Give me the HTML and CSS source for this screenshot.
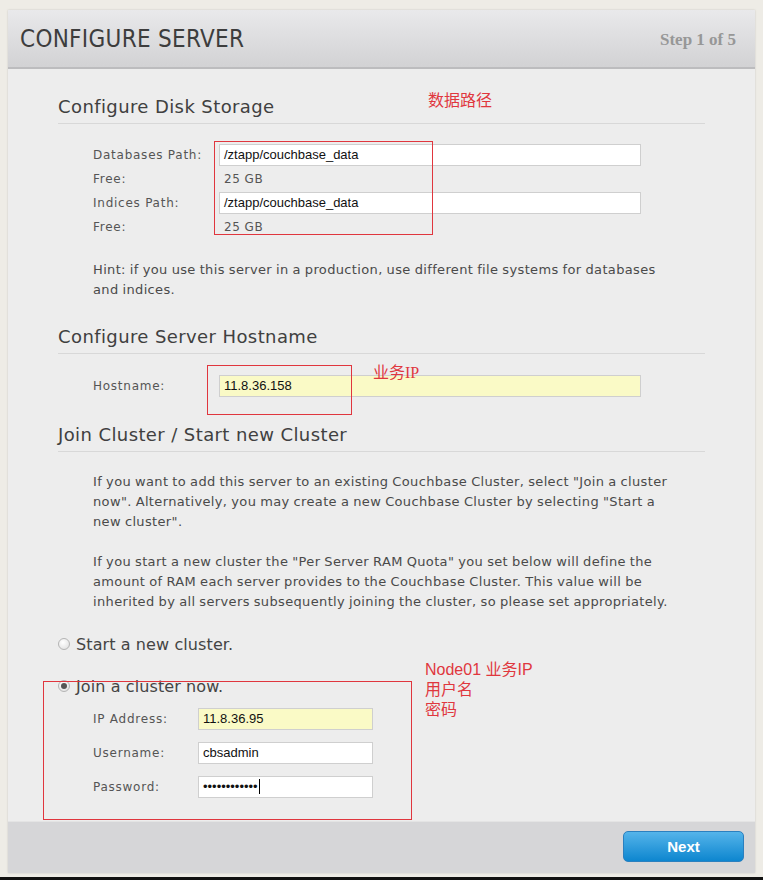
FILE: index.html
```html
<!DOCTYPE html>
<html>
<head>
<meta charset="utf-8">
<link rel="stylesheet" href="styles.css">
</head>
<body>
<div class="panel">
  <div class="header">
    <h1 class="title">CONFIGURE SERVER</h1>
    <span class="step">Step 1 of 5</span>
  </div>
  <div class="main">
    <h2 class="sec sec-first">Configure Disk Storage</h2>
    <div class="block disk">
      <div class="row"><span class="lbl">Databases Path:</span><span class="inp">/ztapp/couchbase_data</span></div>
      <div class="row"><span class="lbl">Free:</span><span class="val">25 GB</span></div>
      <div class="row"><span class="lbl">Indices Path:</span><span class="inp">/ztapp/couchbase_data</span></div>
      <div class="row"><span class="lbl">Free:</span><span class="val">25 GB</span></div>
    </div>
    <p class="txt hint">Hint: if you use this server in a production, use different file systems for databases and indices.</p>

    <h2 class="sec">Configure Server Hostname</h2>
    <div class="block host">
      <div class="row"><span class="lbl">Hostname:</span><span class="inp yellow">11.8.36.158</span></div>
    </div>

    <h2 class="sec">Join Cluster / Start new Cluster</h2>
    <p class="txt p1">If you want to add this server to an existing Couchbase Cluster, select "Join a cluster now". Alternatively, you may create a new Couchbase Cluster by selecting "Start a new cluster".</p>
    <p class="txt p2">If you start a new cluster the "Per Server RAM Quota" you set below will define the amount of RAM each server provides to the Couchbase Cluster. This value will be inherited by all servers subsequently joining the cluster, so please set appropriately.</p>

    <label class="radio r1"><span class="dot"></span>Start a new cluster.</label>
    <label class="radio r2"><span class="dot on"></span>Join a cluster now.</label>
    <div class="block cluster">
      <div class="row"><span class="lbl">IP Address:</span><span class="inp small yellow">11.8.36.95</span></div>
      <div class="row"><span class="lbl">Username:</span><span class="inp small">cbsadmin</span></div>
      <div class="row"><span class="lbl">Password:</span><span class="inp small pw">••••••••••••<span class="caret"></span></span></div>
    </div>
  </div>
  <div class="footer">
    <button class="next">Next</button>
  </div>

  <div class="mark box1"></div>
  <div class="mark box2"></div>
  <div class="mark box3"></div>
  <div class="note n1">数据路径</div>
  <div class="note n2">业务<span class="serif">IP</span></div>
  <div class="note n3">Node01 业务IP<br>用户名<br>密码</div>
</div>
<div class="strip"></div>
</body>
</html>
```

FILE: styles.css
```css
html, body {
  margin: 0;
  padding: 0;
}
body {
  background: #eeece6;
  width: 763px;
  height: 880px;
  overflow: hidden;
  position: relative;
}
.panel {
  position: relative;
  margin: 10px 0 0 8px;
  width: 747px;
  height: 863px;
  background: #ededed;
  box-shadow: 0 0 2px rgba(0,0,0,0.15);
  display: flex;
  flex-direction: column;
}
.header {
  height: 57px;
  border-bottom: 2px solid #bcbcbe;
  background: linear-gradient(#e9e9eb, #d2d2d4);
  display: flex;
  align-items: center;
  justify-content: space-between;
  padding: 0 19px 0 12px;
}
.title {
  margin: 0;
  font-family: "DejaVu Sans Condensed", "DejaVu Sans", sans-serif;
  font-stretch: condensed;
  font-weight: normal;
  font-size: 24px;
  color: #3d3d3d;
  letter-spacing: 0.3px;
}
.step {
  font-family: "Liberation Serif", serif;
  font-weight: bold;
  font-size: 17px;
  color: #979797;
  position: relative;
  top: 1px;
}
.main {
  flex: 1;
  padding: 0 50px;
  color: #555;
}
.sec {
  margin: 25px 0 0 0;
  padding: 0 0 4px 0;
  height: 24px;
  line-height: 24px;
  border-bottom: 1px solid #d8d8d8;
  font-family: "DejaVu Sans", sans-serif;
  font-weight: normal;
  font-size: 18px;
  letter-spacing: 0.4px;
  color: #404040;
}
.sec-first {
  margin-top: 26px;
}
.block {
  padding-left: 35px;
  margin-top: 20px;
}
.disk {
  margin-top: 19px;
}
.cluster {
  margin-top: 4px;
}
.row {
  display: grid;
  grid-template-columns: 126px auto;
  height: 24px;
  align-items: center;
}
.cluster .row {
  grid-template-columns: 105px auto;
  height: 34px;
}
.lbl {
  font-family: "DejaVu Sans", sans-serif;
  font-size: 12px;
  color: #555;
  letter-spacing: 0.75px;
}
.val {
  font-family: "DejaVu Sans", sans-serif;
  font-size: 12px;
  letter-spacing: 0.5px;
  color: #555;
  padding-left: 5px;
}
.inp {
  box-sizing: border-box;
  display: block;
  width: 422px;
  height: 22px;
  line-height: 20px;
  border: 1px solid #cfcfcf;
  background: #fff;
  padding-left: 4px;
  font-family: "Liberation Sans", Arial, sans-serif;
  font-size: 13px;
  color: #111;
  white-space: nowrap;
  overflow: hidden;
}
.inp.small {
  width: 175px;
}
.inp.yellow {
  background: #fafac6;
}
.pw {
  font-size: 13px;
  letter-spacing: 0;
}
.caret {
  display: inline-block;
  width: 1px;
  height: 15px;
  background: #000;
  vertical-align: -3px;
  margin-left: 1px;
}
.txt {
  margin: 0;
  padding-left: 35px;
  width: 583px;
  font-family: "DejaVu Sans", sans-serif;
  font-size: 13px;
  letter-spacing: 0.35px;
  word-spacing: -0.5px;
  line-height: 20px;
  color: #4a4a4a;
}
.hint {
  margin-top: 21px;
}
.p1 {
  margin-top: 20px;
}
.p2 {
  margin-top: 20px;
}
.radio {
  display: flex;
  align-items: center;
  height: 24px;
  font-family: "DejaVu Sans", sans-serif;
  font-size: 16px;
  letter-spacing: 0.1px;
  color: #444;
}
.r1 {
  margin-top: 20px;
}
.r2 {
  margin-top: 18px;
}
.dot {
  box-sizing: border-box;
  width: 12px;
  height: 12px;
  border-radius: 50%;
  border: 1px solid #b4b4b4;
  background: radial-gradient(circle at 40% 35%, #ffffff, #dcdcdc);
  margin-right: 6px;
  position: relative;
}
.dot.on::after {
  content: "";
  position: absolute;
  left: 2px;
  top: 2px;
  width: 6px;
  height: 6px;
  border-radius: 50%;
  background: #555;
}
.footer {
  height: 52px;
  border-top: 1px solid #e4e4e4;
  background: #d6d6d8;
  display: flex;
  justify-content: flex-end;
  align-items: flex-start;
  padding: 9px 11px 0 0;
  box-sizing: border-box;
}
.next {
  width: 121px;
  height: 31px;
  border: 1px solid #2b80bf;
  border-radius: 5px;
  background: linear-gradient(#55b4ea, #0d86cf);
  color: #fff;
  font-family: "Liberation Sans", Arial, sans-serif;
  font-weight: bold;
  font-size: 15px;
  padding: 0;
}
.mark {
  position: absolute;
  border: 1px solid #e0363e;
}
.box1 { left: 206px; top: 131px; width: 217px; height: 92px; }
.box2 { left: 199px; top: 355px; width: 143px; height: 48px; }
.box3 { left: 35px; top: 671px; width: 367px; height: 137px; }
.note {
  position: absolute;
  font-family: "Noto Sans CJK SC", sans-serif;
  font-size: 16px;
  line-height: 20px;
  color: #e0373e;
}
.n1 { left: 420px; top: 79px; }
.n2 { left: 365px; top: 351px; }
.n3 { left: 417px; top: 650px; font-family: "Liberation Sans", "Noto Sans CJK SC", sans-serif; }
.serif { font-family: "Liberation Serif", serif; }
.strip {
  position: absolute;
  left: 0;
  bottom: 0;
  width: 763px;
  height: 3px;
  background: #111;
}
```
